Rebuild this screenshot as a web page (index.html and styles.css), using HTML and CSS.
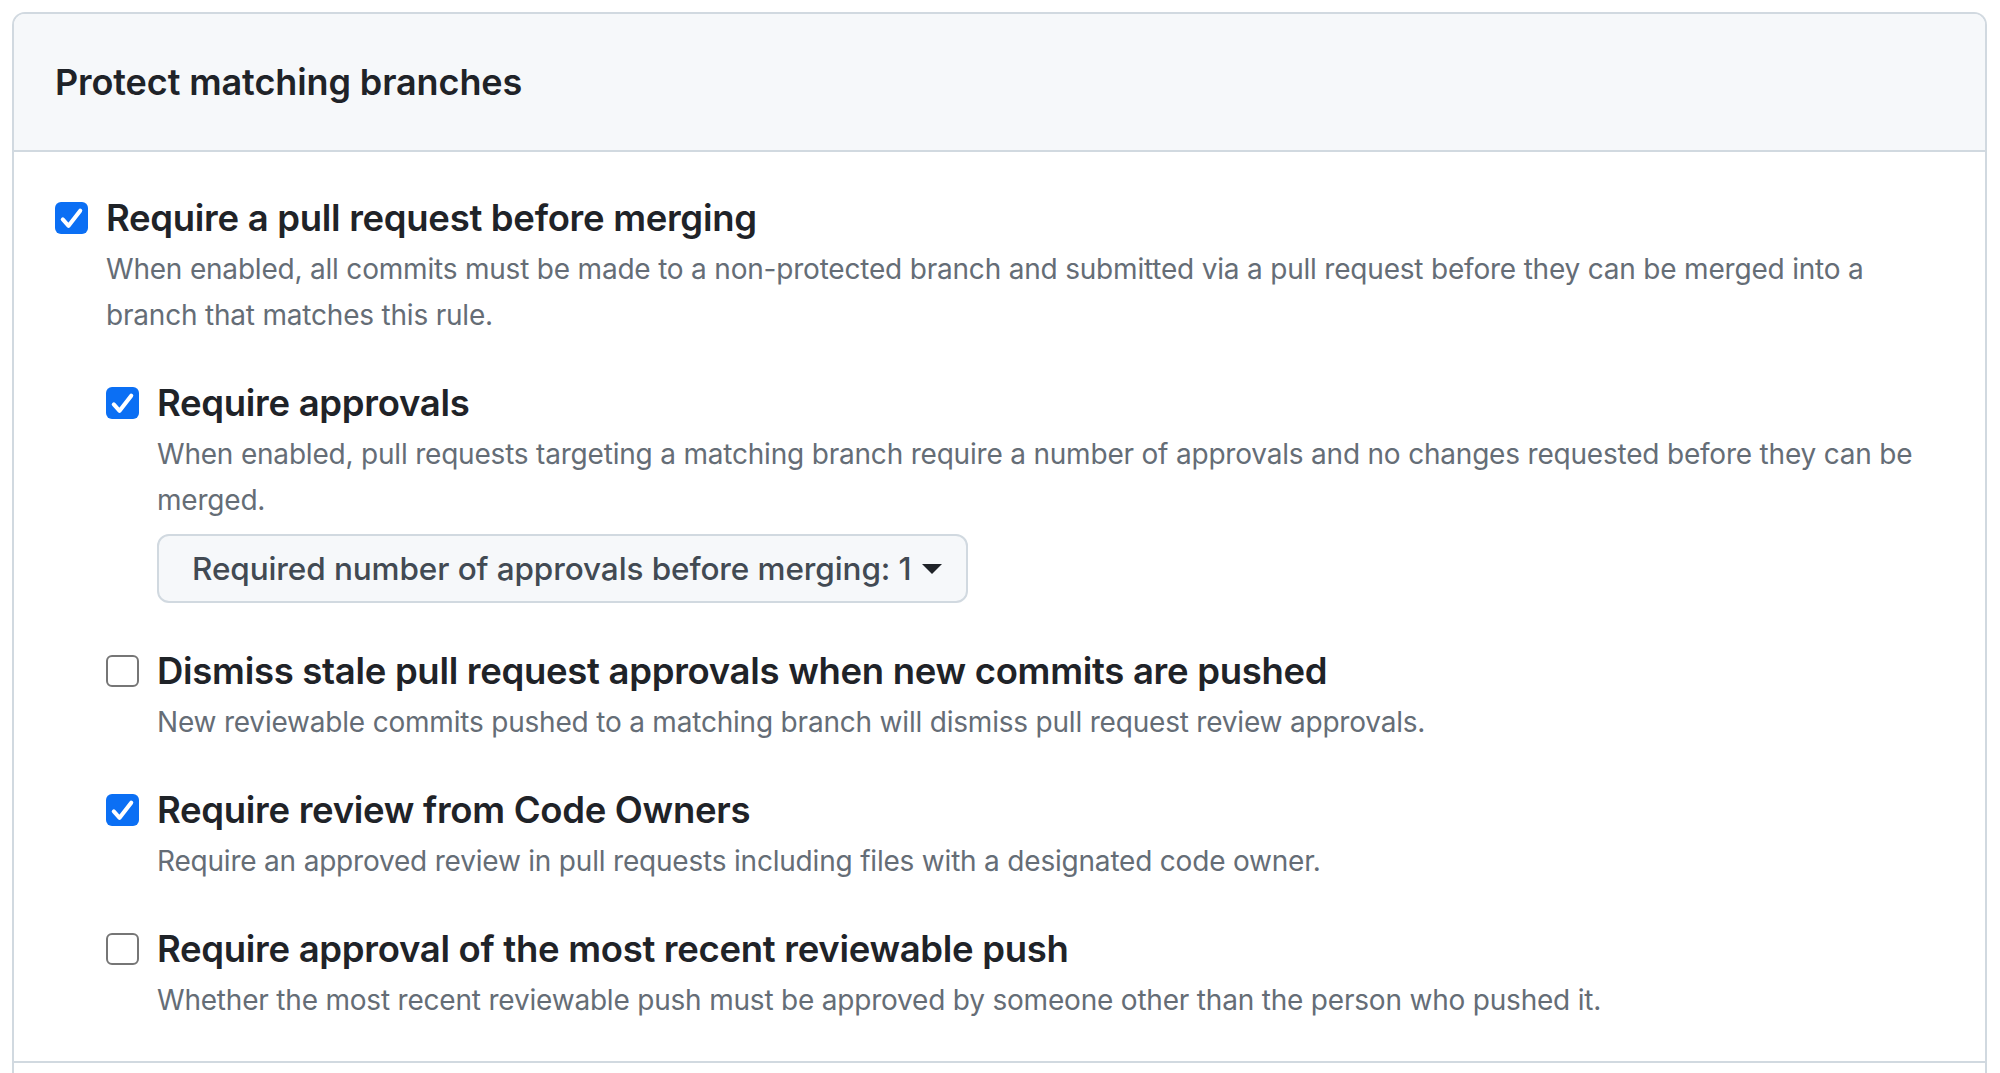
FILE: index.html
```html
<!DOCTYPE html>
<html>
<head>
<meta charset="utf-8">
<link rel="stylesheet" href="styles.css">
</head>
<body>
<section class="box">
  <div class="box-header">
    <h2 class="box-title">Protect matching branches</h2>
  </div>
  <div class="box-body">
    <div class="opt">
      <span class="cb cb-on"><svg viewBox="0 0 33 33"><path d="M7.5 18 L13.5 24.5 L25.5 9" /></svg></span>
      <div class="opt-main">
        <div class="opt-title">Require a pull request before merging</div>
        <p class="opt-desc">When enabled, all commits must be made to a non-protected branch and submitted via a pull request before they can be merged into a branch that matches this rule.</p>
        <div class="sub-list">
          <div class="opt">
            <span class="cb cb-on"><svg viewBox="0 0 33 33"><path d="M7.5 18 L13.5 24.5 L25.5 9" /></svg></span>
            <div class="opt-main">
              <div class="opt-title">Require approvals</div>
              <p class="opt-desc">When enabled, pull requests targeting a matching branch require a number of approvals and no changes requested before they can be merged.</p>
              <div class="select">Required number of approvals before merging: 1<span class="caret"></span></div>
            </div>
          </div>
          <div class="opt">
            <span class="cb"></span>
            <div class="opt-main">
              <div class="opt-title">Dismiss stale pull request approvals when new commits are pushed</div>
              <p class="opt-desc">New reviewable commits pushed to a matching branch will dismiss pull request review approvals.</p>
            </div>
          </div>
          <div class="opt">
            <span class="cb cb-on"><svg viewBox="0 0 33 33"><path d="M7.5 18 L13.5 24.5 L25.5 9" /></svg></span>
            <div class="opt-main">
              <div class="opt-title">Require review from Code Owners</div>
              <p class="opt-desc">Require an approved review in pull requests including files with a designated code owner.</p>
            </div>
          </div>
          <div class="opt">
            <span class="cb"></span>
            <div class="opt-main">
              <div class="opt-title">Require approval of the most recent reviewable push</div>
              <p class="opt-desc">Whether the most recent reviewable push must be approved by someone other than the person who pushed it.</p>
            </div>
          </div>
        </div>
      </div>
    </div>
  </div>
  <div class="box-next"></div>
</section>
</body>
</html>
```

FILE: styles.css
```css
html, body {
  margin: 0;
  padding: 0;
  background: #ffffff;
}
body {
  font-family: Inter, "Noto Sans", "Liberation Sans", sans-serif;
  color: #1f2328;
  padding: 12px 13px 0 12px;
}
.box {
  border: 2px solid #d1d9e0;
  border-bottom: none;
  border-radius: 13px 13px 0 0;
  overflow: hidden;
}
.box-header {
  background: #f6f8fa;
  height: 136px;
  display: flex;
  align-items: center;
  padding-left: 41px;
  border-bottom: 2px solid #d1d9e0;
}
.box-title {
  margin: 0;
  font-size: 36px;
  font-weight: 600;
  letter-spacing: -0.1px;
}
.box-body {
  padding: 41px 41px 38px 41px;
  border-bottom: 2px solid #d1d9e0;
}
.opt {
  display: flex;
  align-items: flex-start;
  gap: 18px;
}
.cb {
  flex: none;
  width: 33px;
  height: 32px;
  margin-top: 9px;
  box-sizing: border-box;
  border-radius: 6px;
  border: 2px solid #767676;
  background: #fff;
  display: flex;
}
.cb-on {
  border: none;
  background: #0b6ff4;
}
.cb svg {
  width: 33px;
  height: 32px;
}
.cb svg path {
  fill: none;
  stroke: #ffffff;
  stroke-width: 4.2;
  stroke-linecap: round;
  stroke-linejoin: round;
}
.opt-main {
  flex: 1;
  min-width: 0;
}
.opt-title {
  font-size: 36.5px;
  font-weight: 600;
  line-height: 50px;
  letter-spacing: -0.3px;
}
.opt-desc {
  margin: 3px 0 0 0;
  font-size: 28px;
  line-height: 46px;
  color: #656d76;
  letter-spacing: -0.2px;
  padding-right: 8px;
}
.sub-list {
  display: flex;
  flex-direction: column;
  gap: 40px;
  margin-top: 40px;
}
.select {
  margin: 11px 0 3px 0;
  width: 811px;
  height: 69px;
  box-sizing: border-box;
  border: 2px solid #d1d9e0;
  border-radius: 12px;
  background: #f6f8fa;
  display: flex;
  align-items: center;
  padding-left: 33px;
  font-size: 31.5px;
  font-weight: 500;
  color: #424a53;
  letter-spacing: -0.1px;
}
.caret {
  display: inline-block;
  width: 0;
  height: 0;
  margin-left: 10px;
  border-left: 10px solid transparent;
  border-right: 10px solid transparent;
  border-top: 10px solid #1f2328;
}
.box-next {
  height: 20px;
}
```
